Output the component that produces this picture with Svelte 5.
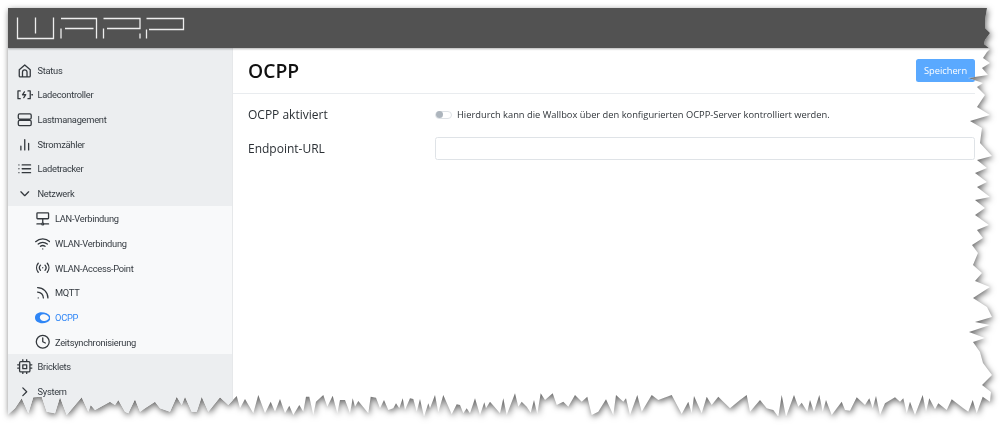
<script>
  // torn edge traced from the reference, [originX, originY, scale-3 points]
  const rightEdge = [987,8, 985,20, 985,28, 990,33, 985,40, 984,44, 990,49, 987,52, 983,58, 990,63, 982,68, 988,75, 968,78, 983,83, 977,87, 985,95, 977,107, 990,115, 970,121, 982,128, 980,143, 992,156, 977,160, 987,168, 975,173, 987,182, 977,187, 990,197, 975,200, 985,208, 975,215, 989,225, 977,230, 983,238, 972,245, 978,253, 973,265, 982,273, 975,281, 990,287, 973,298, 987,307, 992,317, 975,322, 990,325, 969,332, 985,338, 973,342, 980,352, 983,363, 992,375, 982,385, 991,392];
  const bottomLeft = [22,405, 45,385, 65,355, 85,400, 100,352, 125,350, 140,395, 165,400, 180,352, 200,405, 245,352, 265,395, 272,375, 285,390, 330,365, 345,375, 355,360, 375,395, 385,400, 405,358, 420,395, 435,385, 465,365, 480,385, 510,395, 530,350, 545,375, 555,350, 575,395, 590,395, 605,350, 625,395, 660,352, 685,375, 710,348];
  const bottomA = [0,100, 15,72, 40,115, 55,60, 75,115, 92,80, 105,110, 120,72, 135,115, 148,92, 160,120, 178,90, 190,110, 198,65, 208,65, 220,120, 228,80, 250,60, 262,95, 278,62, 292,115, 300,75, 315,75, 330,115, 338,70, 345,95, 355,78, 385,115, 392,65, 408,68, 420,100, 432,75, 445,105, 460,100, 468,85, 478,100, 488,70, 495,105, 510,70, 520,72, 530,110, 540,72, 552,125, 565,85, 570,100, 585,60, 595,112, 610,60, 635,118, 650,88, 660,90, 670,115, 680,100, 690,115, 705,70, 720,120, 733,82, 738,100, 750,80, 780,115, 790,70, 800,120];
  const bottomB = [20,165, 45,100, 55,140, 65,125, 80,140, 92,158, 102,120, 112,162, 122,100, 135,120, 158,100, 170,135, 190,125, 205,140, 225,105, 245,125, 262,110, 275,165, 295,155, 318,118, 340,165, 348,105, 370,125, 378,115, 390,165, 412,105, 425,155, 455,105, 475,120, 515,105, 545,162, 565,125, 575,160, 582,108, 605,160, 620,110, 635,135, 655,110, 670,125, 690,145, 720,120, 740,105];
  const bottomC = [0,215, 30,180, 50,205, 70,210, 85,230, 95,165, 108,230, 132,165, 145,200, 155,188, 172,215, 180,180, 192,215, 208,165, 218,215, 228,180, 245,225, 275,185, 285,210, 300,212, 320,172, 345,195, 358,175, 368,205, 378,168, 390,225, 405,190, 435,172, 450,185, 460,175, 470,220, 480,185, 495,225, 518,165, 528,215, 538,175, 555,208, 565,190, 590,210, 605,178, 640,205, 655,215, 668,180, 680,220, 698,170, 720,185];

  function pairs(list, ox, oy, scale) {
    const out = [];
    for (let i = 0; i < list.length; i += 2) {
      out.push([ox + list[i] / scale - 8, oy + list[i + 1] / scale - 8]);
    }
    return out;
  }

  const bottom = [
    ...pairs(bottomLeft, 0, 280, 3),
    ...pairs(bottomA, 240, 375, 3),
    ...pairs(bottomB, 500, 360, 3),
    ...pairs(bottomC, 750, 340, 3),
  ].reverse();

  const outline = [[0, 0], ...pairs(rightEdge, 0, 0, 1), ...bottom, [0, 406]];
  const tornEdge = `clip-path: polygon(${outline.map(([x, y]) => `${x.toFixed(1)}px ${y.toFixed(1)}px`).join(",")})`;

  const icons = {
    home: "M3.500 10.500 12 3l8.500 7.500V20a1.500 1.500 0 0 1-1.500 1.500H5A1.500 1.500 0 0 1 3.500 20z M8.500 21.500V14a3.500 3.500 0 0 1 7 0v7.500",
    charger: "M5 6H1.500v12H5 M17 6h3.500v12H17 M11.500 7.500 8.500 12h5l-3 4.500 M23 12h1",
    server: "M4 3h16a2 2 0 0 1 2 2v4a2 2 0 0 1-2 2H4a2 2 0 0 1-2-2V5a2 2 0 0 1 2-2z M4 13h16a2 2 0 0 1 2 2v4a2 2 0 0 1-2 2H4a2 2 0 0 1-2-2v-4a2 2 0 0 1 2-2z",
    bars: "M18 20V10 M12 20V4 M6 20v-6",
    list: "M8 6h13 M8 12h13 M8 18h13 M3 6h.01 M3 12h.01 M3 18h.01",
    down: "M6 9l6 6 6-6",
    right: "M9 18l6-6-6-6",
    lan: "M4 3h16a1 1 0 0 1 1 1v7a1 1 0 0 1-1 1H4a1 1 0 0 1-1-1V4a1 1 0 0 1 1-1z M12 12v6.500 M3 20h7 M14 20h7 M10.500 20a1.500 1.500 0 1 0 3 0 1.500 1.500 0 1 0-3 0",
    wifi: "M1 8.800a16 16 0 0 1 22 0 M5 12.500a11 11 0 0 1 14 0 M8.500 16a6 6 0 0 1 7 0 M12 20h.01",
    radio: "M12 12h.01 M15.500 8a6 6 0 0 1 0 8 M8.500 16a6 6 0 0 1 0-8 M19 5a11 11 0 0 1 0 14 M5 19a11 11 0 0 1 0-14",
    rss: "M4 11a9 9 0 0 1 9 9 M4 4a16 16 0 0 1 16 16 M5 20h.01",
    clock: "M12 2a10 10 0 1 0 0 20 10 10 0 0 0 0-20z M12 6v6l4 2",
    cpu: "M6 4h12a2 2 0 0 1 2 2v12a2 2 0 0 1-2 2H6a2 2 0 0 1-2-2V6a2 2 0 0 1 2-2z M9 9h6v6H9z M9 1v3 M15 1v3 M9 20v3 M15 20v3 M20 9h3 M20 14h3 M1 9h3 M1 14h3",
  };

  const topItems = [
    { label: "Status", icon: "home" },
    { label: "Ladecontroller", icon: "charger" },
    { label: "Lastmanagement", icon: "server" },
    { label: "Stromzähler", icon: "bars" },
    { label: "Ladetracker", icon: "list" },
    { label: "Netzwerk", icon: "down" },
  ];
  const subItems = [
    { label: "LAN-Verbindung", icon: "lan" },
    { label: "WLAN-Verbindung", icon: "wifi" },
    { label: "WLAN-Access-Point", icon: "radio" },
    { label: "MQTT", icon: "rss" },
    { label: "OCPP", active: true },
    { label: "Zeitsynchronisierung", icon: "clock" },
  ];
  const bottomItems = [
    { label: "Bricklets", icon: "cpu" },
    { label: "System", icon: "right" },
  ];
</script>

{#snippet navRow(item, sub)}
  <a class="row" class:sub class:active={item.active} href="#top">
    {#if item.active}
      <svg class="icon" viewBox="0 0 24 24" aria-hidden="true">
        <path class="blob" fill-rule="evenodd" d="M10 3.500c7 0 14 3.500 14 8.500s-6 8.500-12.500 8.500C5 20.500 0 17 0 12s4-8.500 10-8.500zM13 6.500c-3.500 0-5.500 2-5.500 5s3 5.500 6 5.500c4 0 8-2.300 8-5s-4.500-5.500-8.500-5.500z" />
      </svg>
    {:else}
      <svg class="icon" viewBox="0 0 24 24" aria-hidden="true"><path d={icons[item.icon]} /></svg>
    {/if}
    <span>{item.label}</span>
  </a>
{/snippet}

<div class="page">
  <div class="paper">
    <div class="window" style={tornEdge}>
      <header class="topbar">
        <svg class="logo" viewBox="16 16 172 24" aria-label="WARP" role="img">
          <path d="M17.500 17.500V38.500H53.500V17.500 M35.500 17.500V33.500 M61 38.500V28.500 M61 18.500H96.500V38.500 M65 28.500H93.500 M103.500 38.500V28.500 M103.500 18.500H140V28.500H107 M140 33.500V38.500 M146.500 38.500V29.500 M146.500 18.500H183.500V29.500H149" />
        </svg>
      </header>
      <div class="body">
        <nav class="sidebar">
          {#each topItems as item}
            {@render navRow(item, false)}
          {/each}
          <div class="group">
            {#each subItems as item}
              {@render navRow(item, true)}
            {/each}
          </div>
          {#each bottomItems as item}
            {@render navRow(item, false)}
          {/each}
        </nav>
        <main class="content">
          <div class="title-row">
            <h1>OCPP</h1>
            <button type="button" disabled>Speichern</button>
          </div>
          <div class="form-row first">
            <span class="label">OCPP aktiviert</span>
            <div class="control">
              <span class="switch"><span class="knob"></span></span>
              <span class="hint">Hierdurch kann die Wallbox über den konfigurierten OCPP-Server kontrolliert werden.</span>
            </div>
          </div>
          <div class="form-row">
            <label class="label" for="endpoint">Endpoint-URL</label>
            <input id="endpoint" type="text" />
          </div>
        </main>
      </div>
    </div>
  </div>
</div>

<style>
  :global(body) {
    background: #fff;
    overflow: hidden;
  }

  .page {
    padding: 8px 0 0 8px;
    height: 425px;
    box-sizing: border-box;
  }

  .paper {
    width: 985px;
    height: 408px;
    filter: drop-shadow(1px 2px 3px rgba(0, 0, 0, 0.6));
  }

  .window {
    width: 100%;
    height: 100%;
    background: #fff;
    display: flex;
    flex-direction: column;
    font-family: "Open Sans", "Noto Sans", sans-serif;
    color: #212529;
    overflow: hidden;
  }

  .topbar {
    flex: none;
    height: 40px;
    background: #525252;
    display: flex;
    align-items: flex-start;
    padding: 8px 0 0 8px;
    box-sizing: border-box;
    box-shadow: 0 1px 2px rgba(0, 0, 0, 0.3);
    position: relative;
    z-index: 1;
  }

  .logo {
    width: 172px;
    height: 24px;
    fill: none;
    stroke: #eee;
    stroke-width: 1.300;
    filter: blur(0.3px);
  }

  .body {
    flex: 1;
    display: flex;
    min-height: 0;
  }

  .sidebar {
    flex: none;
    width: 225px;
    padding-top: 10px;
    box-sizing: border-box;
    background: #eceef0;
    border-right: 1px solid #e6e8ea;
    filter: blur(0.35px);
  }

  .row {
    height: 24.660px;
    display: flex;
    align-items: center;
    padding-left: 9.500px;
    gap: 5px;
    font-family: Roboto, "Open Sans", sans-serif;
    font-size: 9.300px;
    letter-spacing: -0.27px;
    color: #343a40;
    text-decoration: none;
  }

  .row.sub {
    padding-left: 27px;
  }

  .row.active {
    color: #2f86f6;
  }

  .group {
    background: #f8f9fa;
    margin-top: 0.500px;
  }

  .icon {
    width: 15.500px;
    height: 15.500px;
    margin: 0 -0.250px;
    flex: none;
    fill: none;
    stroke: #33383d;
    stroke-width: 2;
    stroke-linecap: round;
    stroke-linejoin: round;
  }

  .blob {
    fill: #2f86f6;
    stroke: none;
  }

  .content {
    flex: 1;
    min-width: 0;
    padding: 0 18px 0 15px;
    filter: blur(0.35px);
  }

  .title-row {
    display: flex;
    justify-content: space-between;
    align-items: center;
    height: 46px;
    border-bottom: 1px solid #e9ecef;
    box-sizing: border-box;
    margin-left: -15px;
    padding-left: 15px;
  }

  h1 {
    margin: 0;
    font-size: 19.300px;
    font-weight: 600;
    color: #111;
  }

  button {
    width: 59px;
    height: 23px;
    padding: 0;
    border: 0;
    border-radius: 2.500px;
    background: #5aa9ff;
    color: #fff;
    font: inherit;
    font-size: 9.300px;
  }

  .form-row {
    display: grid;
    grid-template-columns: 187px 1fr;
    align-items: center;
    height: 23px;
    margin-top: 10.500px;
  }

  .form-row.first {
    margin-top: 9px;
  }

  .label {
    font-size: 12px;
    color: #2b3035;
  }

  .control {
    display: flex;
    align-items: center;
    gap: 5px;
  }

  .switch {
    width: 17px;
    height: 8px;
    padding: 0 1px;
    border-radius: 5px;
    border: 1px solid #dee2e6;
    box-sizing: border-box;
    background: #fff;
    display: flex;
    align-items: center;
  }

  .knob {
    width: 7px;
    height: 7px;
    border-radius: 50%;
    margin-left: -1px;
    background: #adb5bd;
  }

  .hint {
    font-size: 9.320px;
    color: #2f3439;
    white-space: nowrap;
  }

  input {
    height: 23px;
    width: 100%;
    box-sizing: border-box;
    border: 1px solid #dfe3e7;
    border-radius: 2.500px;
    background: #fff;
  }
</style>
